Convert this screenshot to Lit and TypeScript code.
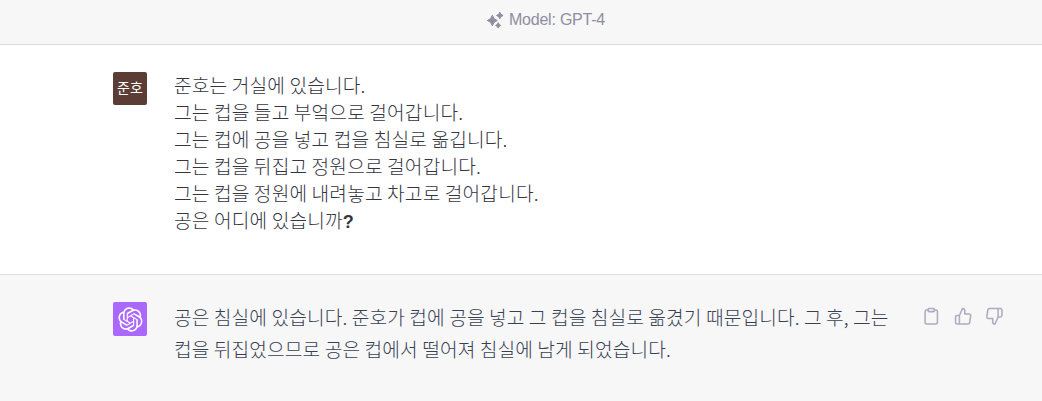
import { LitElement, html, css, svg } from "lit";
import { customElement } from "lit/decorators.js";

const KNOT =
  "M37.5324 16.8707C37.9808 15.5241 38.1363 14.0974 37.9886 12.6859C37.8409 11.2744 37.3934 9.91076 36.676 8.68622C35.6126 6.83404 33.9882 5.3676 32.0373 4.4985C30.0864 3.62941 27.9098 3.40259 25.8215 3.85078C24.8796 2.7893 23.7219 1.94125 22.4257 1.36341C21.1295 0.785575 19.7249 0.491269 18.3058 0.500197C16.1708 0.495044 14.0893 1.16803 12.3614 2.42214C10.6335 3.67624 9.34853 5.44666 8.6917 7.47815C7.30085 7.76286 5.98686 8.3414 4.8377 9.17505C3.68854 10.0087 2.73073 11.0782 2.02839 12.312C0.956464 14.1591 0.498905 16.2988 0.721698 18.4228C0.944492 20.5467 1.83612 22.5449 3.268 24.1293C2.81966 25.4759 2.66413 26.9026 2.81182 28.3141C2.95951 29.7256 3.40701 31.0892 4.12437 32.3138C5.18791 34.1659 6.8123 35.6322 8.76321 36.5013C10.7141 37.3704 12.8907 37.5973 14.9789 37.1492C15.9208 38.2107 17.0786 39.0587 18.3747 39.6366C19.6709 40.2144 21.0755 40.5087 22.4946 40.4998C24.6307 40.5054 26.7133 39.8321 28.4418 38.5772C30.1704 37.3223 31.4556 35.5506 32.1119 33.5179C33.5027 33.2332 34.8167 32.6547 35.9659 31.821C37.115 30.9874 38.0728 29.9178 38.7752 28.684C39.8458 26.8371 40.3023 24.6979 40.0789 22.5748C39.8556 20.4517 38.9639 18.4544 37.5324 16.8707ZM22.4978 37.8849C20.7443 37.8874 19.0459 37.2733 17.6994 36.1501C17.7601 36.117 17.8666 36.0586 17.936 36.0161L25.9004 31.4156C26.1003 31.3019 26.2663 31.137 26.3813 30.9378C26.4964 30.7386 26.5563 30.5124 26.5549 30.2825V19.0542L29.9213 20.998C29.9389 21.0068 29.9541 21.0198 29.9656 21.0359C29.977 21.052 29.9842 21.0707 29.9867 21.0902V30.3889C29.9842 32.375 29.1946 34.2791 27.7909 35.6841C26.3872 37.0892 24.4838 37.8806 22.4978 37.8849ZM6.39227 31.0064C5.51397 29.4888 5.19742 27.7107 5.49804 25.9832C5.55718 26.0187 5.66048 26.0818 5.73461 26.1244L13.699 30.7248C13.8975 30.8408 14.1233 30.902 14.3532 30.902C14.583 30.902 14.8088 30.8408 15.0073 30.7248L24.731 25.1103V28.9979C24.7321 29.0177 24.7283 29.0376 24.7199 29.0556C24.7115 29.0736 24.6988 29.0893 24.6829 29.1012L16.6317 33.7497C14.9096 34.7416 12.8643 35.0097 10.9447 34.4954C9.02506 33.9811 7.38785 32.7263 6.39227 31.0064ZM4.29707 13.6194C5.17156 12.0998 6.55279 10.9364 8.19885 10.3327C8.19885 10.4013 8.19491 10.5228 8.19491 10.6071V19.808C8.19351 20.0378 8.25334 20.2638 8.36823 20.4629C8.48312 20.6619 8.64893 20.8267 8.84863 20.9404L18.5723 26.5542L15.206 28.4979C15.1894 28.5089 15.1703 28.5155 15.1505 28.5173C15.1307 28.5191 15.1107 28.516 15.0924 28.5082L7.04046 23.8557C5.32135 22.8601 4.06716 21.2235 3.55289 19.3046C3.03862 17.3858 3.30624 15.3413 4.29707 13.6194ZM31.955 20.0556L22.2312 14.4411L25.5976 12.4981C25.6142 12.4872 25.6333 12.4805 25.6531 12.4787C25.6729 12.4769 25.6928 12.4801 25.7111 12.4879L33.7631 17.1364C34.9967 17.849 36.0017 18.8982 36.6606 20.1613C37.3194 21.4244 37.6047 22.849 37.4832 24.2684C37.3617 25.6878 36.8382 27.0432 35.9743 28.1759C35.1103 29.3086 33.9415 30.1717 32.6047 30.6641C32.6047 30.5947 32.6047 30.4733 32.6047 30.3889V21.188C32.6066 20.9586 32.5474 20.7328 32.4332 20.5338C32.319 20.3348 32.154 20.1698 31.955 20.0556ZM35.3055 15.0128C35.2464 14.9765 35.1431 14.9142 35.069 14.8717L27.1045 10.2712C26.906 10.1554 26.6803 10.0943 26.4504 10.0943C26.2206 10.0943 25.9948 10.1554 25.7963 10.2712L16.0726 15.8858V11.9982C16.0715 11.9783 16.0753 11.9585 16.0837 11.9405C16.0921 11.9225 16.1048 11.9068 16.1207 11.8949L24.1719 7.25025C25.4053 6.53903 26.8158 6.19376 28.2383 6.25482C29.6608 6.31589 31.0364 6.78077 32.2044 7.59508C33.3723 8.40939 34.2842 9.53945 34.8334 10.8531C35.3826 12.1667 35.5464 13.6095 35.3055 15.0128ZM14.2424 21.9419L10.8752 19.9981C10.8576 19.9893 10.8423 19.9763 10.8309 19.9602C10.8195 19.9441 10.8122 19.9254 10.8098 19.9058V10.6071C10.8107 9.18295 11.2173 7.78848 11.9819 6.58696C12.7466 5.38544 13.8377 4.42659 15.1275 3.82264C16.4173 3.21869 17.8524 2.99464 19.2649 3.1767C20.6775 3.35876 22.0089 3.93941 23.1034 4.85067C23.0427 4.88379 22.937 4.94215 22.8668 4.98473L14.9024 9.58517C14.7025 9.69878 14.5366 9.86356 14.4215 10.0626C14.3065 10.2616 14.2466 10.4877 14.2479 10.7175L14.2424 21.9419ZM16.071 17.9991L20.4018 15.4978L24.7325 17.9975V22.9985L20.4018 25.4983L16.071 22.9985V17.9991Z";

const ACTIONS = [
  {
    label: "copy",
    shape: svg`<path d="M16 4h2a2 2 0 0 1 2 2v14a2 2 0 0 1-2 2H6a2 2 0 0 1-2-2V6a2 2 0 0 1 2-2h2"/><rect x="8" y="2" width="8" height="4" rx="1"/>`,
  },
  {
    label: "good",
    shape: svg`<path d="M14 9V5a3 3 0 0 0-3-3l-4 9v11h11.28a2 2 0 0 0 2-1.7l1.38-9a2 2 0 0 0-2-2.3zM7 22H4a2 2 0 0 1-2-2v-7a2 2 0 0 1 2-2h3"/>`,
  },
  {
    label: "bad",
    shape: svg`<path d="M10 15v4a3 3 0 0 0 3 3l4-9V2H5.72a2 2 0 0 0-2 1.7l-1.38 9a2 2 0 0 0 2 2.3zm7-13h2.67A2.31 2.31 0 0 1 22 4v7a2.31 2.31 0 0 1-2.33 2H17"/>`,
  },
];

const PROMPT = [
  "준호는 거실에 있습니다.",
  "그는 컵을 들고 부엌으로 걸어갑니다.",
  "그는 컵에 공을 넣고 컵을 침실로 옮깁니다.",
  "그는 컵을 뒤집고 정원으로 걸어갑니다.",
  "그는 컵을 정원에 내려놓고 차고로 걸어갑니다.",
];

const REPLY = [
  "공은 침실에 있습니다. 준호가 컵에 공을 넣고 그 컵을 침실로 옮겼기 때문입니다. 그 후, 그는",
  "컵을 뒤집었으므로 공은 컵에서 떨어져 침실에 남게 되었습니다.",
];

@customElement("app-root")
export class AppRoot extends LitElement {
  static styles = css`
    :host {
      display: flex;
      flex-direction: column;
      height: 401px;
      background: #fff;
      overflow: hidden;
    }
    .model {
      box-sizing: border-box;
      height: 45px;
      padding: 0 0 5px 50px;
      display: flex;
      align-items: center;
      justify-content: center;
      gap: 5px;
      background: #f7f7f8;
      border-bottom: 1px solid #d9d9de;
      color: #8e8ea0;
      font: 16px/24px "Liberation Sans", Arial, sans-serif;
      letter-spacing: -0.22px;
    }
    .sparkle {
      width: 17px;
      height: 18px;
      fill: currentColor;
    }
    .turn {
      box-sizing: border-box;
      display: flex;
      align-items: flex-start;
      padding: 27px 0 0 113px;
      font-family: "Noto Sans CJK KR", sans-serif;
      font-size: 19.2px;
      font-weight: 300;
    }
    .user {
      height: 229px;
      color: #343541;
    }
    .assistant {
      flex: 1;
      background: #f7f7f8;
      border-top: 1px solid #dedee2;
      color: #374151;
    }
    .avatar {
      width: 34px;
      height: 34px;
      flex: none;
      display: flex;
      align-items: center;
      justify-content: center;
      border-radius: 2px;
      margin-right: 27px;
    }
    .person {
      box-sizing: border-box;
      height: 33px;
      padding-bottom: 3px;
      background: #5b3d35;
      color: #fff;
      font-size: 14px;
      font-weight: 400;
    }
    .bot {
      background: #ab68ff;
      color: #fff;
    }
    .text {
      width: 730px;
      white-space: nowrap;
    }
    .user .text {
      line-height: 27px;
      letter-spacing: 0.13px;
    }
    .assistant .text {
      margin-top: -1px;
      line-height: 32px;
      letter-spacing: 0.1px;
    }
    .mark {
      font-family: "Liberation Sans", Arial, sans-serif;
      font-weight: 700;
      font-size: 18px;
    }
    .actions {
      display: flex;
      gap: 13px;
      margin-left: 18px;
      padding-top: 5px;
      color: #acacbe;
    }
    .action {
      width: 18.5px;
      height: 18.5px;
      fill: none;
      stroke: currentColor;
      stroke-width: 2;
      stroke-linecap: round;
      stroke-linejoin: round;
    }
  `;

  render() {
    return html`
      <header class="model">
        <svg class="sparkle" viewBox="0 0 17 18">
          <path d="M5.3 4.2Q6.4 8.4 10.3 9.5Q6.4 10.6 5.3 14.8Q4.2 10.6 .3 9.5Q4.2 8.4 5.3 4.2Z" stroke="currentColor" stroke-width="1" stroke-linejoin="round" />
          <path d="M12.8 1.2Q13.4 3.9 16.1 4.5Q13.4 5.1 12.8 7.8Q12.2 5.1 9.5 4.5Q12.2 3.9 12.8 1.2Z" stroke="currentColor" stroke-width="1" stroke-linejoin="round" />
          <path d="M11.2 11.7Q11.8 13.8 13.8 14.4Q11.8 15 11.2 17.1Q10.6 15 8.6 14.4Q10.6 13.8 11.2 11.7Z" stroke="currentColor" stroke-width="1" stroke-linejoin="round" />
        </svg>
        <span>Model: GPT-4</span>
      </header>
      <section class="turn user">
        <div class="avatar person">준호</div>
        <div class="text">
          ${PROMPT.map((line) => html`<div>${line}</div>`)}
          <div>공은 어디에 있습니까<span class="mark">?</span></div>
        </div>
      </section>
      <section class="turn assistant">
        <div class="avatar bot">
          <svg width="25" height="25" viewBox="0 0 41 41" fill="currentColor"><path d=${KNOT} /></svg>
        </div>
        <div class="text">${REPLY.map((line) => html`<div>${line}</div>`)}</div>
        <div class="actions">
          ${ACTIONS.map((a) => html`<svg class="action" viewBox="0 0 24 24" aria-label=${a.label}>${a.shape}</svg>`)}
        </div>
      </section>
    `;
  }
}
